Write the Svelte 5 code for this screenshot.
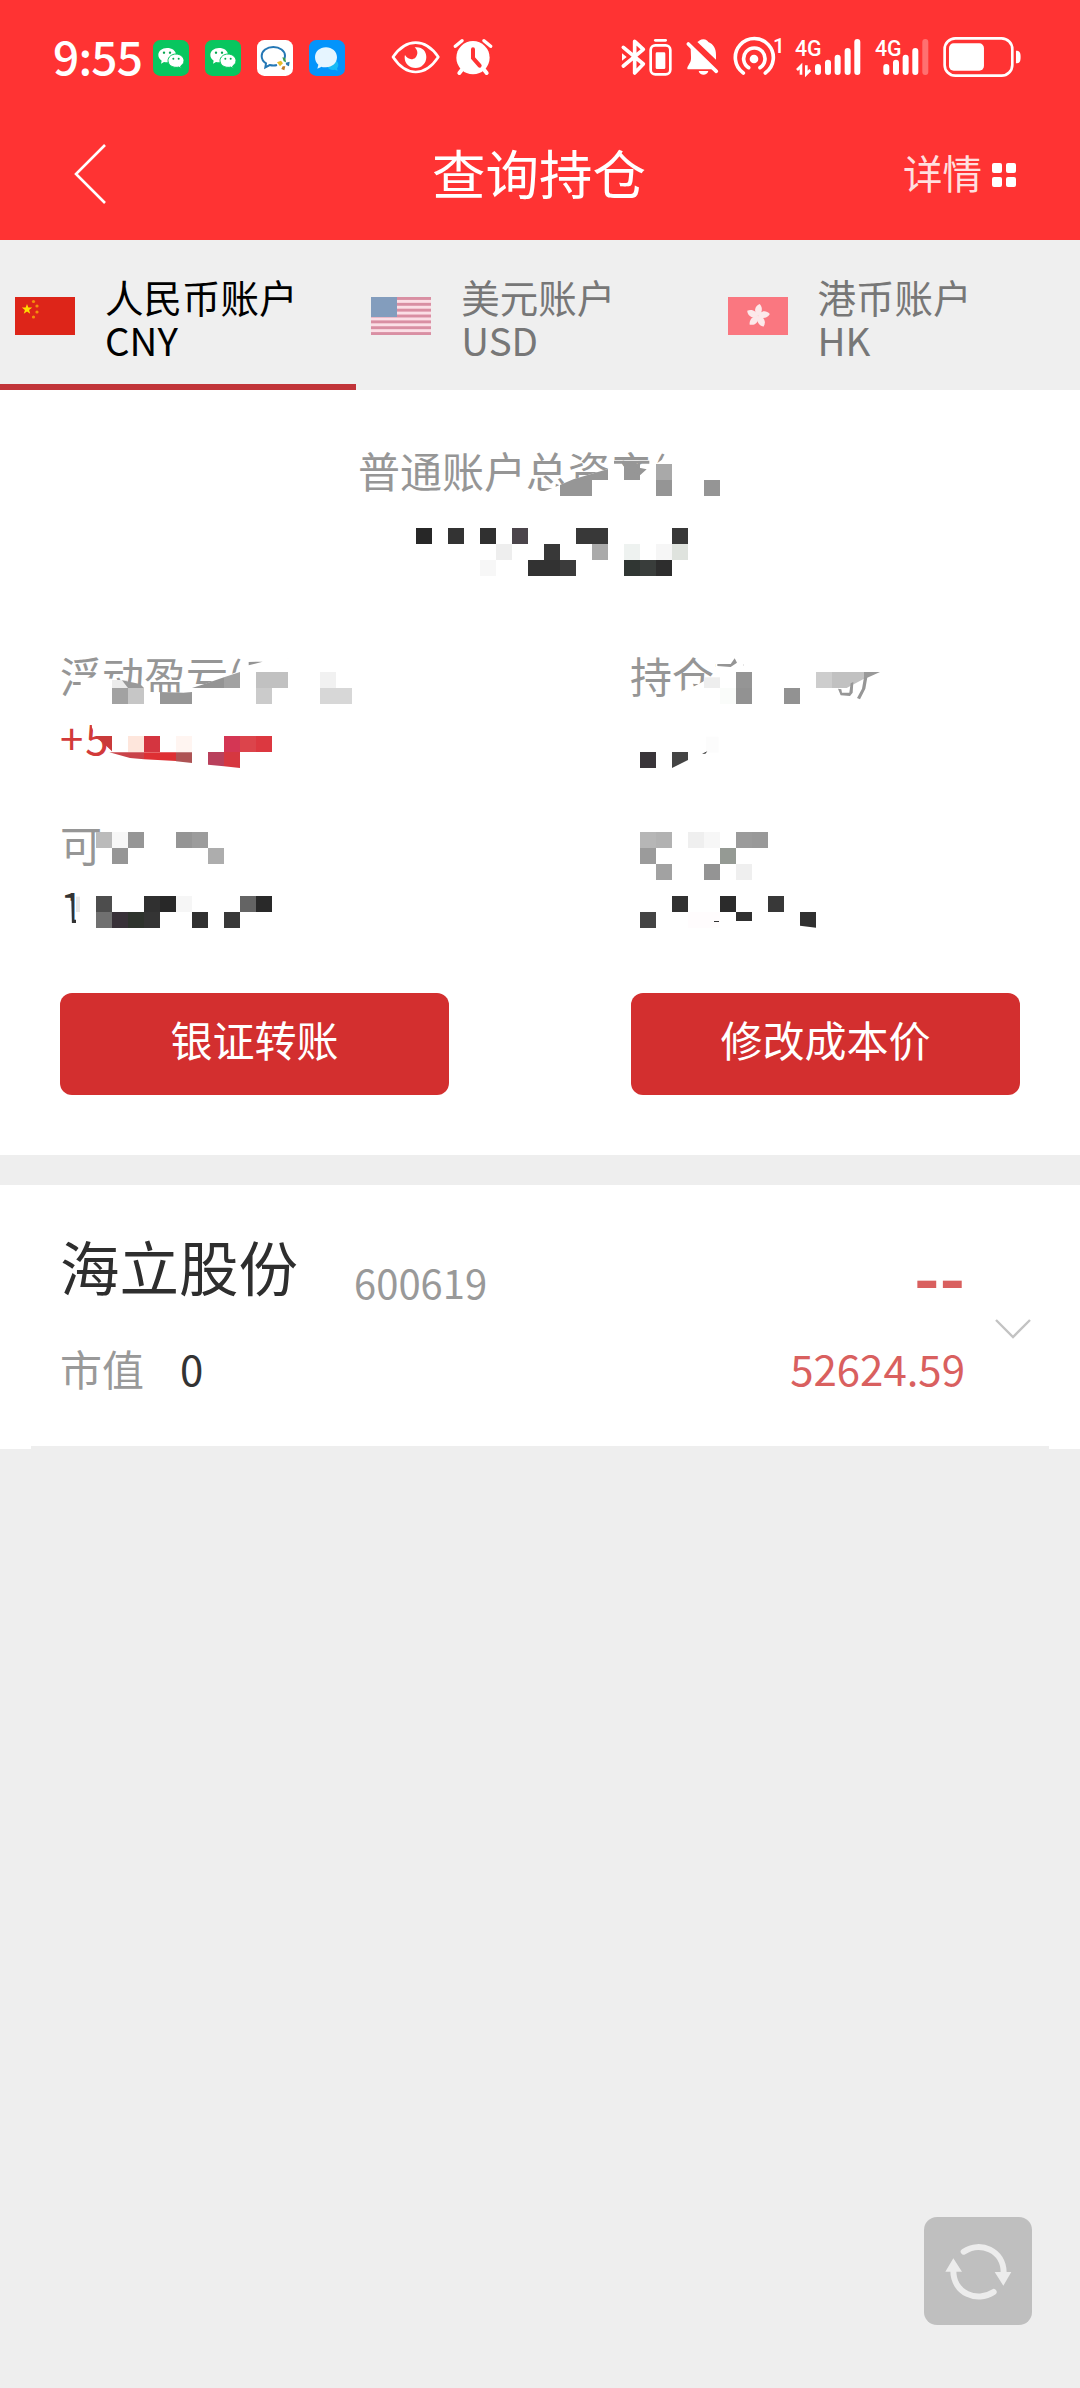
<!--
  Holdings query screen: status bar, red nav bar, currency tabs,
  account summary (amounts masked by mosaic cells) and the position list.
-->
<script lang="ts">
  type Cell = [x: number, y: number, w: number, h: number, fill: string];
  type Shape = [points: string, fill: string];

  interface Field {
    label: string;
    value: string;
    tone?: string;
    width: number;
    height: number;
    covers: string[];
    cells: Cell[];
    shapes: Shape[];
  }

  const C = 48;

  const tabs = [
    { flag: 'cn', name: '人民币账户', code: 'CNY' },
    { flag: 'us', name: '美元账户', code: 'USD' },
    { flag: 'hk', name: '港币账户', code: 'HK' }
  ];
  let active = $state(0);

  // Mosaic geometry is in thirds of a pixel, one cell is 48 units.
  const total: Field = {
    label: '普通账户总资产(',
    value: '',
    width: 400,
    height: 160,
    covers: ['590,215 612,184 660,165 700,148 804,117 870,104 948,102 982,78 1010,60 1200,60 1200,215'],
    cells: [
      [852, 102, C, C, '#969696'],
      [948, 102, C, C, '#a9a9a9'],
      [948, 150, C, C, '#959595'],
      [1092, 150, C, C, '#959595'],
      [228, 294, C, C, '#272727'],
      [324, 294, C, C, '#333'],
      [420, 294, C, C, '#303030'],
      [516, 294, C, C, '#4b454b'],
      [708, 294, 96, C, '#383838'],
      [996, 294, C, C, '#383838'],
      [468, 342, C, C, '#eee'],
      [612, 342, C, C, '#383838'],
      [756, 342, C, C, '#aaa'],
      [852, 342, C, C, '#eef2f0'],
      [948, 342, C, C, '#f6f6f6'],
      [996, 342, C, C, '#dfe3de'],
      [420, 390, C, C, '#f7f7f7'],
      [564, 390, 96, C, '#323232'],
      [660, 390, C, C, '#3b3b3b'],
      [852, 390, C, C, '#303633'],
      [900, 390, C, C, '#393d3b'],
      [948, 390, C, C, '#2d2d2d']
    ],
    shapes: [
      ['660,198 660,165 700,148 804,117 804,150 756,150 756,198', '#969696'],
      ['822,92 928,92 928,101 890,101 890,112 920,118 900,136 852,110 846,101 822,101', '#969696']
    ]
  };

  const fields: Field[] = [
    {
      label: '浮动盈亏(元)',
      value: '+5',
      tone: 'gain',
      width: 340,
      height: 150,
      covers: [
        '90,185 88,150 122,150 122,112 216,116 300,134 330,156 430,158 480,138 600,92 612,62 1000,40 1000,220 90,220',
        '614,50 720,50 720,100 614,100',
        '154,240 156,262 166,290 240,290 240,240'
      ],
      cells: [
        [216, 120, C, 24, '#ececec'],
        [216, 144, C, C, '#a2a2a2'],
        [264, 144, C, C, '#c6c6c6'],
        [648, 96, 96, C, '#c1c1c1'],
        [648, 144, C, C, '#cbcbcb'],
        [840, 96, C, C, '#f1f1f1'],
        [840, 144, 96, C, '#d7d7d7'],
        [264, 288, C, C, '#fee6dc'],
        [312, 288, C, C, '#d43540'],
        [408, 288, C, C, '#fff5f1'],
        [552, 288, C, C, '#d43654'],
        [600, 288, C, C, '#dc444b'],
        [648, 288, C, C, '#dc3840']
      ],
      shapes: [
        ['246,121 300,132 312,144 264,144', '#999'],
        ['360,156 430,158 456,156 456,192 360,192', '#979797'],
        ['456,144 500,130 552,112 552,144', '#949494'],
        ['552,144 552,112 600,96 600,144', '#a2a2a2'],
        ['626,66 668,65 626,76', '#949494'],
        ['164,288 216,288 216,334 190,310', '#c93a3a'],
        ['208,337 312,337 312,358 270,354', '#c94349'],
        ['312,337 408,337 408,363 312,358', '#de2f33'],
        ['408,337 456,337 456,369 408,364', '#ad5354'],
        ['504,336 552,336 552,379 504,374', '#b9405c'],
        ['552,336 600,336 600,384 552,379', '#d63740']
      ]
    },
    {
      label: '持仓市',
      value: '',
      width: 340,
      height: 150,
      covers: ['184,192 216,152 250,140 318,104 318,85 400,78 400,40 560,40 560,192', '318,40 400,40 400,120 318,120'],
      cells: [
        [282, 112, C, 32, '#eee'],
        [330, 144, C, C, '#fafcfa'],
        [378, 96, C, C, '#959595'],
        [378, 144, C, C, '#929292'],
        [522, 144, C, C, '#929292'],
        [618, 96, C, C, '#cdcdcd'],
        [90, 336, C, C, '#393539'],
        [288, 290, 38, C, '#fcfcfc']
      ],
      shapes: [
        ['322,72 362,72 374,55 381,68 362,81 322,78', '#959595'],
        ['666,96 762,96 762,116 710,144 666,144', '#c1c1c1'],
        ['762,96 810,96 762,118', '#999'],
        ['684,146 694,148 696,158 718,158 722,130 730,126 728,158 720,168 692,166', '#969696'],
        ['762,112 772,112 766,146 750,178 741,174 756,146', '#969696'],
        ['186,336 234,336 234,360 186,384', '#444'],
        ['276,341 292,334 286,341', '#333']
      ]
    },
    {
      label: '可',
      value: '1',
      width: 340,
      height: 140,
      covers: ['108,235 180,235 180,350 108,350', '60,272 94,272 96,350 60,350'],
      cells: [
        [168, 66, C, C, '#bbb'],
        [216, 66, C, C, '#f7f7f7'],
        [264, 66, C, C, '#969696'],
        [216, 114, C, C, '#969696'],
        [408, 66, C, C, '#959595'],
        [456, 66, C, C, '#9c9c9c'],
        [504, 114, C, C, '#adadad'],
        [108, 260, 12, 46, '#e8e8e8'],
        [168, 258, C, C, '#4d4d4d'],
        [312, 258, C, C, '#303030'],
        [360, 258, C, C, '#282828'],
        [408, 258, C, C, '#f6f6f6'],
        [600, 258, C, C, '#646464'],
        [648, 258, C, C, '#292929'],
        [168, 306, C, C, '#707070'],
        [216, 306, C, C, '#383138'],
        [264, 306, C, C, '#2e332d'],
        [312, 306, C, C, '#343434'],
        [456, 306, C, C, '#303030'],
        [552, 306, C, C, '#383838']
      ],
      shapes: []
    },
    {
      label: '',
      value: '',
      width: 340,
      height: 140,
      covers: [],
      cells: [
        [90, 66, C, C, '#b6b6b6'],
        [138, 66, C, C, '#b2b2b2'],
        [234, 66, C, C, '#efefef'],
        [282, 66, C, C, '#f7f7f7'],
        [378, 66, C, C, '#9b9b9b'],
        [426, 66, C, C, '#999'],
        [90, 114, C, C, '#9b9b9b'],
        [330, 114, C, C, '#959a94'],
        [138, 162, C, C, '#a2a2a2'],
        [282, 162, C, C, '#949494'],
        [378, 162, C, C, '#efefef'],
        [186, 258, C, C, '#313131'],
        [330, 258, C, C, '#2b2b2b'],
        [474, 258, C, C, '#383838'],
        [90, 306, C, C, '#444'],
        [234, 306, 96, C, '#fffcfd'],
        [312, 333, 15, 3, '#333'],
        [378, 306, C, 27, '#303030']
      ],
      shapes: [['570,306 618,306 618,353 570,347', '#303030']]
    }
  ];

  const actions = ['银证转账', '修改成本价'];
</script>

{#snippet wechat()}
  <svg class="app-icon" viewBox="0 0 108 108">
    <rect width="108" height="108" rx="22" fill="#08c65f" />
    <path d="M42 24c-15 0-26 9-26 21 0 7 4 13 10 17l-2 9 9-5c3 1 6 1 9 1 15 0 27-9 27-22S57 24 42 24z" fill="#fff" />
    <path d="M69 42c-13 0-24 9-24 20s11 20 24 20c3 0 6 0 8-1l8 4-2-7c6-4 10-9 10-16 0-11-11-20-24-20z" fill="#fff" stroke="#08c65f" stroke-width="3" />
    <g fill="#08a650">
      <circle cx="33" cy="38" r="3.5" /><circle cx="51" cy="38" r="3.5" />
      <circle cx="61" cy="56" r="3" /><circle cx="77" cy="56" r="3" />
    </g>
  </svg>
{/snippet}

{#snippet masked(field: Field)}
  <div class="field-text">
    <p class="label">{field.label}</p>
    <p class="value {field.tone ?? ''}">{field.value}</p>
  </div>
  <svg class="mosaic" viewBox="0 0 {field.width * 3} {field.height * 3}">
    {#each field.covers as points}
      <polygon {points} fill="#fff" />
    {/each}
    {#each field.cells as [x, y, width, height, fill]}
      <rect {x} {y} {width} {height} {fill} />
    {/each}
    {#each field.shapes as [points, fill]}
      <polygon {points} {fill} />
    {/each}
  </svg>
{/snippet}

<div class="screen">
  <header>
    <div class="status">
      <span class="time">9:55</span>
      <div class="apps">
        {@render wechat()}
        {@render wechat()}
        <svg class="app-icon" viewBox="0 0 108 108">
          <rect width="108" height="108" rx="22" fill="#fff" />
          <path d="M82 56c1-3 2-6 2-9C84 32 68 21 49 21S14 32 14 48c0 10 5 17 13 22l-2 12 13-7c8 2 15 2 22 0" fill="none" stroke="#2477b5" stroke-width="6" />
          <path d="M76 52l9 3 2 12-7-3z" fill="#3a9b4c" />
          <path d="M86 68l12-3-2 14-8-4z" fill="#2b78ae" />
          <path d="M85 79l-3 12-9-4 4-8z" fill="#bf7a27" />
          <path d="M60 67l12-5 6 8-9 9z" fill="#e8bb2b" />
        </svg>
        <svg class="app-icon" viewBox="0 0 108 108">
          <rect width="108" height="108" rx="22" fill="#0494fb" />
          <path d="M78 60c6 3 10 8 10 14 0 5-2 8-4 11l2 7-9-3c-8 2-17 0-21-7z" fill="#19baf6" />
          <path d="M51 22c-19 0-33 13-33 30 0 9 4 17 10 22l-3 12 13-6c4 2 8 2 13 2 18 0 33-13 33-30S69 22 51 22z" fill="#e6f5ff" />
        </svg>
      </div>
      <svg class="eye" viewBox="1050 0 155 240" fill="none" stroke="#fff">
        <path d="M1059 111c18-26 40-43 68-43s50 17 68 43c-18 27-40 45-68 45s-50-18-68-45z" stroke-width="8" stroke-linejoin="round" />
        <path d="M1124 82c22-3 35 11 35 29 0 19-14 33-32 33-19 0-33-14-33-31 0-3 0-5 1-8 7 13 22 16 31 8 9-9 8-22-2-31z" fill="#fff" stroke="none" />
      </svg>
      <svg class="alarm" viewBox="1240 0 122 240">
        <circle cx="1300" cy="113" r="50" fill="#fff" />
        <path d="M1247 79l20-17M1353 79l-20-17" stroke="#fff" stroke-width="10" stroke-linecap="round" />
        <path d="M1268 148l-9 11M1332 148l9 11" stroke="#fff" stroke-width="12" stroke-linecap="round" />
        <path d="M1300 88v26l20 23" fill="none" stroke="#f33" stroke-width="12" stroke-linecap="round" />
      </svg>
      <svg class="system" viewBox="60 0 1210 240" fill="none" stroke="#fff">
        <!-- bluetooth -->
        <path d="M70 82l60 50-26 27V64l26 24-60 50" stroke-width="11" stroke-linejoin="round" stroke-linecap="round" />
        <path d="M66 100l14 11-14 11z" fill="#fff" stroke="none" />
        <path d="M166 61h31" stroke-width="8" stroke-linecap="round" />
        <rect x="152" y="76" width="59" height="87" rx="14" stroke-width="8" />
        <rect x="167" y="97" width="29" height="50" rx="4" fill="#fff" stroke="none" />
        <!-- muted bell -->
        <path d="M292 66c5-2 9-8 18-8s12 5 15 8c16 7 23 20 23 38v15z" fill="#fff" stroke="none" />
        <path d="M272 84l66 64h-72c-5 0-5-4-3-8l8-14c2-5 2-9 2-15z" fill="#fff" stroke="none" />
        <path d="M296 153h29c-3 15-26 15-29 0z" fill="#fff" stroke="none" />
        <path d="M265 72l84 82" stroke-width="11" stroke-linecap="round" />
        <!-- hotspot -->
        <circle cx="462" cy="117" r="13" fill="#fff" stroke="none" />
        <path d="M430 159a57 57 0 1 1 66 0" stroke-width="11" stroke-linecap="round" />
        <path d="M446 143a32 32 0 1 1 34 0" stroke-width="11" stroke-linecap="round" />
        <!-- signal -->
        <g stroke-width="18" stroke-linecap="round">
          <path d="M654 141v15M684 128v28M713 113v43M743 93v63M772 66v90" />
          <path d="M859 141v15M888 128v28M917 113v43M946 93v63" />
          <path d="M976 66v90" opacity=".3" />
        </g>
        <path d="M603 164v-26l-12 12M619 136v26l12-12" stroke-width="8" />
        <!-- battery -->
        <rect x="1034" y="55" width="203" height="112" rx="32" stroke-width="8" />
        <rect x="1047" y="70" width="105" height="82" rx="14" fill="#fff" stroke="none" />
        <path d="M1248 92c10 0 14 4 14 19s-4 19-14 19z" fill="#fff" stroke="none" />
        <g class="system-text">
          <text x="519" y="98" font-size="62">1</text>
          <text x="585" y="109" font-size="68" textLength="80" lengthAdjust="spacingAndGlyphs">4G</text>
          <text x="825" y="109" font-size="68" textLength="80" lengthAdjust="spacingAndGlyphs">4G</text>
        </g>
      </svg>
    </div>
    <nav>
      <button class="back" aria-label="返回">
        <svg width="32" height="60" viewBox="0 0 32 60"><path d="M31 1L2 30l29 29" fill="none" stroke="#fff" stroke-width="2.6" /></svg>
      </button>
      <h1>查询持仓</h1>
      <button class="detail">
        详情
        <span class="dots"><i></i><i></i><i></i><i></i></span>
      </button>
    </nav>
  </header>

  <div class="tabs">
    {#each tabs as tab, i}
      <button class="tab" class:active={i === active} onclick={() => (active = i)}>
        <svg class="flag" viewBox="0 0 60 38" preserveAspectRatio="none">
          {#if tab.flag === 'cn'}
            <rect width="60" height="38" fill="#dd2519" />
            <path d="M12 7l1.3 3.6h3.9l-3.1 2.4 1.1 3.8-3.2-2.3-3.2 2.3 1.1-3.8-3.1-2.4h3.9z" fill="#ffde00" />
            <g fill="#f4900c">
              <circle cx="18.5" cy="4.5" r="1.6" /><circle cx="22" cy="9" r="1.6" />
              <circle cx="22" cy="15" r="1.6" /><circle cx="18.5" cy="20" r="1.6" />
            </g>
          {:else if tab.flag === 'us'}
            <rect width="60" height="38" fill="#fbdfe6" />
            {#each [0, 1, 2, 3, 4, 5, 6] as n}
              <rect y={n * 5.85} width="60" height="2.92" fill="#d98fa3" />
            {/each}
            <rect width="26" height="20" fill="#839dbd" />
          {:else}
            <rect width="60" height="38" fill="#fa7780" />
            {#each [0, 72, 144, 216, 288] as angle}
              <path d="M30 19c-5-3-5-9 0-12 4 3 4 9 0 12z" fill="#fce9ea" transform="rotate({angle + 8} 30 19)" />
            {/each}
          {/if}
        </svg>
        <span class="tab-text">
          <span>{tab.name}</span>
          <span>{tab.code}</span>
        </span>
      </button>
    {/each}
  </div>

  <section class="summary">
    <div class="total">{@render masked(total)}</div>
    <div class="fields">
      {#each fields as field}
        <div class="field" style:height="{field.height}px">{@render masked(field)}</div>
      {/each}
    </div>
    <div class="actions">
      {#each actions as action}
        <button>{action}</button>
      {/each}
    </div>
  </section>

  <section class="position">
    <div class="info">
      <div class="row">
        <h2>海立股份</h2>
        <span class="code">600619</span>
        <span class="dash">--</span>
      </div>
      <div class="row second">
        <span class="muted">市值</span>
        <span class="amount">0</span>
        <span class="profit">52624.59</span>
      </div>
    </div>
    <svg class="chevron" width="36" height="20" viewBox="0 0 36 20"><path d="M1 1l17 17L35 1" fill="none" stroke="#c3c3c3" stroke-width="2.4" /></svg>
  </section>

  <button class="refresh" aria-label="刷新">
    <svg width="68" height="60" viewBox="132 150 204 180" fill="none" stroke="#ececec">
      <path d="M191 182c50-33 120-4 120 63" stroke-width="18" stroke-linecap="round" />
      <path d="M281 303c-50 33-122 4-121-66" stroke-width="18" stroke-linecap="round" />
      <path d="M284 243h50l-24 41zM136 242h50l-26-40z" fill="#ececec" stroke="none" />
    </svg>
  </button>
</div>

<style>
  :global(body) {
    background: #eee;
  }
  .screen {
    width: 1080px;
    min-height: 2388px;
    font-family: 'Noto Sans CJK SC', sans-serif;
    color: #333;
    background: #eee;
  }
  button {
    border: 0;
    padding: 0;
    background: none;
    font: inherit;
    color: inherit;
  }
  h1,
  h2,
  p {
    margin: 0;
    font-weight: 400;
  }
  svg {
    display: block;
    flex: none;
  }

  header {
    height: 240px;
    background: #ff3333;
    color: #fff;
  }
  .status {
    display: flex;
    align-items: center;
    height: 80px;
    padding: 20px 56.7px 0 53px;
  }
  .time {
    width: 100px;
    margin-bottom: 10px;
    font-size: 46px;
    line-height: 80px;
    letter-spacing: -0.8px;
    font-weight: 500;
  }
  .apps {
    display: flex;
    gap: 16px;
    margin-bottom: 4px;
  }
  .app-icon {
    width: 36px;
    height: 36px;
  }
  .eye {
    width: 51.67px;
    height: 80px;
    margin-left: 45px;
  }
  .alarm {
    width: 40.67px;
    height: 80px;
    margin-left: 11.6px;
  }
  .system {
    width: 403.3px;
    height: 80px;
    margin-left: auto;
  }
  .system-text text {
    fill: #fff;
    stroke: none;
    font-family: Roboto, sans-serif;
    font-weight: 500;
  }
  nav {
    display: grid;
    grid-template-columns: 1fr auto 1fr;
    align-items: center;
    height: 140px;
    padding: 4px 64px 0 74px;
    box-sizing: border-box;
  }
  .back svg {
    margin-top: 4px;
  }
  h1 {
    font-size: 53.5px;
    line-height: 80px;
    margin-left: -12px;
  }
  .detail {
    display: flex;
    align-items: center;
    justify-content: flex-end;
    gap: 10px;
    line-height: 56px;
    font-size: 39.5px;
    color: rgb(255 255 255 / 0.85);
  }
  .dots {
    display: grid;
    grid-template-columns: 10px 10px;
    gap: 4px;
    margin-top: 5px;
  }
  .dots i {
    height: 10px;
    border-radius: 2px;
    background: #fff;
  }

  .tabs {
    display: flex;
    height: 150px;
    background: #efefef;
  }
  .tab {
    display: flex;
    align-items: center;
    gap: 30px;
    width: 356.3px;
    padding: 8px 0 0 15px;
    border-bottom: 6px solid transparent;
    font-size: 38.5px;
    line-height: 42.5px;
    text-align: left;
    color: #777;
  }
  .tab.active {
    border-color: #c13439;
    color: #000;
  }
  .tab-text {
    display: flex;
    flex-direction: column;
    padding-top: 3px;
  }
  .flag {
    width: 60px;
    height: 38px;
  }

  .summary {
    display: flex;
    flex-direction: column;
    height: 765px;
    padding-top: 40px;
    box-sizing: border-box;
    background: #fff;
  }
  .total,
  .field {
    position: relative;
  }
  .total {
    width: 400px;
    height: 160px;
    margin: 0 auto 50px 340px;
  }
  .field {
    width: 340px;
  }
  .fields {
    display: grid;
    grid-template-columns: 340px 340px;
    gap: 20px 230px;
    padding-left: 40px;
  }
  .field-text {
    padding: 5px 0 0 20px;
    white-space: nowrap;
    font-size: 42px;
    line-height: 60px;
  }
  .field:nth-child(n + 3) .field-text {
    padding-top: 4px;
  }
  .total .field-text {
    padding: 10px 0 0 18px;
  }
  .label {
    height: 61px;
    color: #969696;
  }
  .value {
    height: 60px;
  }
  .gain {
    padding-top: 1px;
    letter-spacing: 2px;
    color: #d23a3a;
  }
  .mosaic {
    position: absolute;
    inset: 0;
    width: 100%;
    height: 100%;
  }
  .actions {
    display: flex;
    justify-content: space-between;
    padding: 43px 60px 0;
  }
  .actions button {
    width: 389px;
    height: 102px;
    padding-bottom: 11px;
    border-radius: 12px;
    background: #d32f2f;
    color: #fff;
    font-size: 42px;
    line-height: 62px;
  }

  .position {
    display: flex;
    align-items: center;
    height: 264px;
    margin-top: 30px;
    padding: 0 49px 0 60px;
    box-sizing: border-box;
    background: linear-gradient(#eee, #eee) 31px 261px / 1018px 3px no-repeat #fff;
  }
  .info {
    width: 905px;
    margin-right: 30px;
  }
  .row {
    display: flex;
    height: 90px;
    line-height: 90px;
  }
  .row.second {
    padding-top: 8px;
    margin-bottom: -3px;
    font-size: 42px;
  }
  h2 {
    margin-top: -5px;
    font-size: 59.5px;
    color: #2e2e2e;
  }
  .code {
    margin: 12px 0 0 56px;
    font-size: 40px;
    color: #999;
  }
  .dash {
    margin: 4px 0 0 auto;
    font-size: 69px;
    font-weight: 700;
    color: #d9605f;
  }
  .muted {
    color: #999;
  }
  .amount {
    margin-left: 36px;
  }
  .profit {
    margin-left: auto;
    color: #d9605f;
  }
  .chevron {
    margin-top: 23px;
  }

  .refresh {
    position: fixed;
    right: 48px;
    bottom: 63px;
    display: grid;
    place-items: center;
    width: 108px;
    height: 108px;
    border-radius: 13px;
    background: #bfbfbf;
  }
</style>
